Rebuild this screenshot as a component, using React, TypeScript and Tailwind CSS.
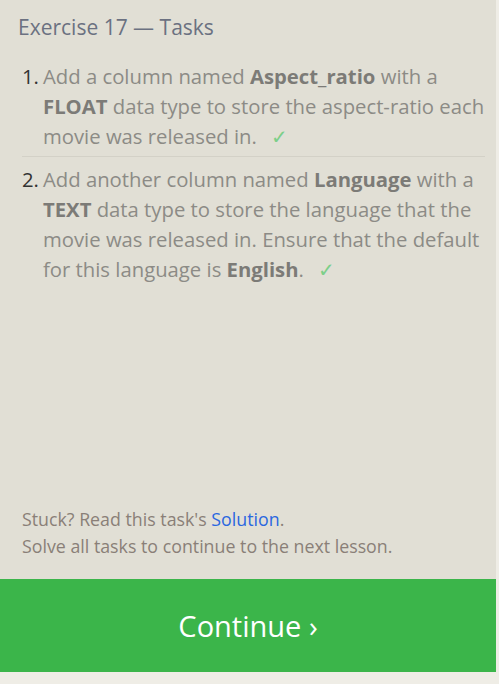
import React from 'react';

const Check: React.FC = () => (
  <span className="ml-[14px] text-[#7ccf89]">✓</span>
);

const App: React.FC = () => {
  return (
    <div
      className="w-[499px] h-[684px] bg-[#efede6]"
      style={{ fontFamily: '"Open Sans", "Noto Sans", sans-serif' }}
    >
      <div className="w-[496px] h-[672px] bg-[#e1dfd5] flex flex-col">
        <div className="px-[18px] pt-[13px] text-[21px] leading-[28px] text-[#6b7181]">
          Exercise 17 — Tasks
        </div>

        <ol className="mt-[20px] pl-[22px] pr-[11px] text-[20.3px] leading-[30px] text-[#8c8b86]">
          <li className="flex pb-[5px] border-b border-[#d3d1c7]">
            <span className="w-[21px] shrink-0 text-[#333333]">1.</span>
            <span>
              Add a column named <b className="text-[#7c7b77]">Aspect_ratio</b> with a{' '}
              <b className="text-[#7c7b77]">FLOAT</b> data type to store the aspect-ratio each
              movie was released in.
              <Check />
            </span>
          </li>
          <li className="flex pt-[7px]">
            <span className="w-[21px] shrink-0 text-[#333333]">2.</span>
            <span>
              Add another column named <b className="text-[#7c7b77]">Language</b> with a{' '}
              <b className="text-[#7c7b77]">TEXT</b> data type to store the language that the
              movie was released in. Ensure that the default for this language is{' '}
              <b className="text-[#7c7b77]">English</b>.
              <Check />
            </span>
          </li>
        </ol>

        <div className="mt-auto px-[22px] pb-[19px] text-[17.8px] leading-[27px] text-[#8a7f78]">
          <p>
            Stuck? Read this task's <a className="text-[#2a67e0]">Solution</a>.
          </p>
          <p>Solve all tasks to continue to the next lesson.</p>
        </div>

        <button className="h-[93px] w-full bg-[#3bb54a] text-white text-[29px] flex items-center justify-center">
          Continue ›
        </button>
      </div>
    </div>
  );
};

export default App;
